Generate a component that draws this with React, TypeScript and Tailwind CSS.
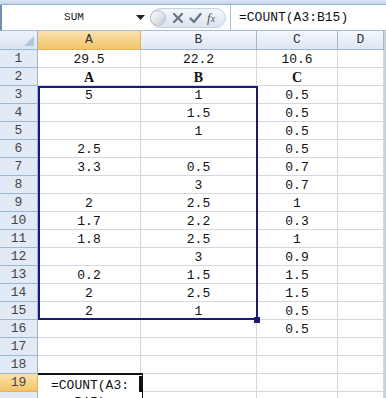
import React from "react";

const W = [103, 116, 81, 46];

const data: (string | null)[][] = [
  ["29.5", "22.2", "10.6"],
  ["A", "B", "C"],
  ["5", "1", "0.5"],
  ["", "1.5", "0.5"],
  ["", "1", "0.5"],
  ["2.5", "", "0.5"],
  ["3.3", "0.5", "0.7"],
  ["", "3", "0.7"],
  ["2", "2.5", "1"],
  ["1.7", "2.2", "0.3"],
  ["1.8", "2.5", "1"],
  ["", "3", "0.9"],
  ["0.2", "1.5", "1.5"],
  ["2", "2.5", "1.5"],
  ["2", "1", "0.5"],
  ["", "", "0.5"],
  ["", "", ""],
  ["", "", ""],
  ["", "", ""],
  ["", "", ""],
];

export default function App() {
  return (
    <div className="relative w-[386px] h-[398px] overflow-hidden bg-white font-['Liberation_Mono',monospace] text-[13px] text-[#111]">
      {/* ribbon bottom strip */}
      <div className="h-[5px] bg-gradient-to-b from-[#dbe7f5] to-[#bfd2ea] border-b border-[#9db4d2]" />
      {/* formula bar */}
      <div className="h-[26px] flex items-stretch bg-white border-b border-[#a9bfd6] border-l-2 border-l-[#6f8fb5]">
        <div className="w-[128px] flex items-center justify-center text-[11px] text-[#222] pl-[16px]">SUM</div>
        <div className="w-[20px] flex items-center justify-center">
          <svg width="9" height="6" viewBox="0 0 9 6"><path d="M0 0 L9 0 L4.5 5 Z" fill="#222" /></svg>
        </div>
        <div className="flex items-center">
          <div className="relative flex items-center h-[20px] w-[76px] rounded-[10px] bg-gradient-to-b from-[#f3f7fc] to-[#dae5f2] border border-[#c3d3e6]">
            <div className="absolute -left-[1px] top-[1px] w-[16px] h-[16px] rounded-full bg-gradient-to-br from-[#ffffff] to-[#c7ccd3] border border-[#b9c2cc]" />
            <div className="ml-[21px] flex items-center gap-[5px]">
              <svg width="12" height="12" viewBox="0 0 12 12"><path d="M2 2 L10 10 M10 2 L2 10" stroke="#6b7380" strokeWidth="2.2" strokeLinecap="round" /></svg>
              <svg width="13" height="12" viewBox="0 0 13 12"><path d="M1.5 6.5 L5 10 L11.5 2" stroke="#6b7380" strokeWidth="2.2" fill="none" strokeLinecap="round" strokeLinejoin="round" /></svg>
              <span className="font-['Liberation_Serif',serif] italic text-[13px] text-[#555] leading-none">f<span className="text-[10px]">x</span></span>
            </div>
          </div>
        </div>
        <div className="ml-[4px] flex-1 flex items-center border-l border-[#a9bfd6] pl-[8px] text-[13px] text-[#111] whitespace-nowrap">=COUNT(A3:B15)</div>
      </div>

      {/* header row */}
      <div className="flex h-[19px]">
        <div className="w-[38px] shrink-0 bg-gradient-to-b from-[#eef3fa] to-[#d9e4f1] border-r border-b border-[#9eb6ce] relative">
          <svg className="absolute right-[3px] bottom-[3px]" width="10" height="10" viewBox="0 0 10 10"><path d="M10 0 L10 10 L0 10 Z" fill="#b4c5da" /></svg>
        </div>
        {["A", "B", "C", "D"].map((c, i) => (
          <div
            key={c}
            style={{ width: W[i] }}
            className={
              "shrink-0 flex items-center justify-center border-r border-b text-[13px] " +
              (i === 0
                ? "bg-gradient-to-b from-[#fbe2ad] to-[#f2c466] border-[#e1b35a] text-[#333]"
                : "bg-gradient-to-b from-[#f5f8fc] to-[#dde6f2] border-[#9eb6ce] text-[#333]")
            }
          >
            {c}
          </div>
        ))}
        <div className="flex-1 bg-[#c9d3de]" />
      </div>

      {/* rows */}
      {data.map((row, r) => (
        <div key={r} className="flex h-[18px]">
          <div
            className={
              "w-[38px] shrink-0 flex items-center justify-center border-r border-b text-[13px] " +
              (r === 18
                ? "bg-gradient-to-b from-[#fbe2ad] to-[#f2c466] border-[#e1b35a] text-[#444]"
                : "bg-[#e2eaf6] border-[#9eb6ce] text-[#444]")
            }
          >
            {r < 19 ? r + 1 : ""}
          </div>
          {[0, 1, 2, 3].map((ci) => (
            <div
              key={ci}
              style={{ width: W[ci] }}
              className={
                "shrink-0 flex items-center justify-center border-r border-b border-[#d4d8de] pt-[2px] " +
                (r === 1 ? "font-['Liberation_Serif',serif] font-bold text-[14px]" : "")
              }
            >
              {ci < 3 ? row[ci] : ""}
            </div>
          ))}
          <div className="flex-1 bg-[#c9d3de]" />
        </div>
      ))}

      {/* selection A3:B15 */}
      <div className="absolute left-[38px] top-[86px] w-[220px] h-[234px] border-2 border-[#1c1a78] pointer-events-none" />
      <div className="absolute left-[254px] top-[317px] w-[6px] h-[6px] bg-[#1c1a78]" />

      {/* editing cell A19 */}
      <div className="absolute left-[38px] top-[373px] w-[105px] h-[40px] bg-white border-t-2 border-r border-[#111] flex flex-col items-center pt-[2px] leading-[17px] text-[13px]">
        <div>=COUNT(A3:</div>
        <div>B15)</div>
      </div>
      <div className="absolute left-[139px] top-[376px] w-[4px] h-[16px] bg-[#111]" />
    </div>
  );
}
